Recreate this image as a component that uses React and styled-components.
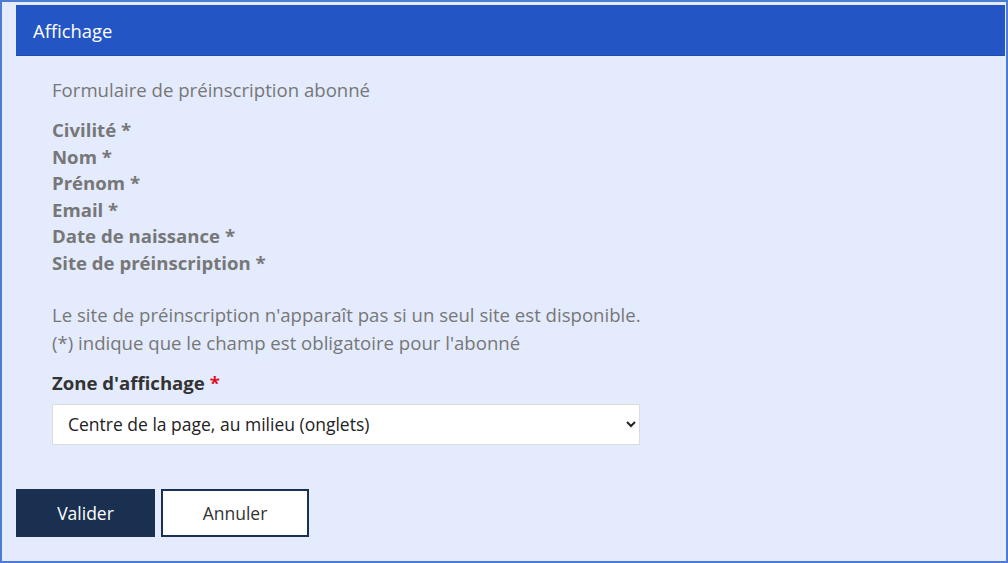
import styled, { createGlobalStyle } from "styled-components";

const GlobalStyle = createGlobalStyle`
  html, body {
    margin: 0;
    padding: 0;
    background: #e3ebfd;
  }
  body {
    font-family: "Open Sans", "Noto Sans", sans-serif;
  }
`;

const fields = [
  "Civilité",
  "Nom",
  "Prénom",
  "Email",
  "Date de naissance",
  "Site de préinscription",
];

function App() {
  return (
    <>
      <GlobalStyle />
      <Frame>
        <Header>
          <HeaderTitle>Affichage</HeaderTitle>
        </Header>
        <Body>
          <Intro>Formulaire de préinscription abonné</Intro>
          <FieldList>
            {fields.map((f) => (
              <FieldName key={f}>{f} *</FieldName>
            ))}
          </FieldList>
          <Notes>
            <Note>Le site de préinscription n'apparaît pas si un seul site est disponible.</Note>
            <Note>(*) indique que le champ est obligatoire pour l'abonné</Note>
          </Notes>
          <Label>
            Zone d'affichage <Required>*</Required>
          </Label>
          <Select defaultValue="centre">
            <option value="centre">Centre de la page, au milieu (onglets)</option>
            <option value="haut">Haut de la page</option>
            <option value="droite">Colonne de droite</option>
          </Select>
        </Body>
        <Actions>
          <Button $primary>Valider</Button>
          <Button>Annuler</Button>
        </Actions>
      </Frame>
    </>
  );
}

const Frame = styled.div`
  box-sizing: border-box;
  width: 1008px;
  height: 563px;
  border: 2px solid #4d7cd4;
  background: #e3ebfd;
  padding: 3px 1px 0 14px;
  display: flex;
  flex-direction: column;
`;

const Header = styled.div`
  height: 51px;
  background: #2356c4;
  border-bottom: 1px solid #1d4cb5;
  box-sizing: border-box;
  display: flex;
  align-items: center;
  padding-left: 17px;
`;

const HeaderTitle = styled.span`
  color: #fff;
  font-size: 18.4px;
`;

const Body = styled.div`
  padding: 20px 0 0 36px;
  display: flex;
  flex-direction: column;
  align-items: flex-start;
`;

const Intro = styled.div`
  color: #777;
  font-size: 18.6px;
  line-height: 28px;
`;

const FieldList = styled.div`
  margin-top: 13px;
  display: flex;
  flex-direction: column;
`;

const FieldName = styled.div`
  color: #777;
  font-weight: 700;
  font-size: 18.6px;
  line-height: 26.6px;
`;

const Notes = styled.div`
  margin-top: 24px;
`;

const Note = styled.div`
  color: #777;
  font-size: 18.6px;
  line-height: 28px;
`;

const Label = styled.div`
  margin-top: 12px;
  color: #333;
  font-weight: 700;
  font-size: 18.6px;
  line-height: 28px;
`;

const Required = styled.span`
  color: #e0101e;
`;

const Select = styled.select`
  margin-top: 7px;
  width: 588px;
  height: 41px;
  box-sizing: border-box;
  border: 1px solid #dcdcdc;
  background: #fff;
  font-family: "Open Sans", "Noto Sans", sans-serif;
  font-size: 17.5px;
  color: #222;
  padding: 0 10px 0 11px;
`;

const Actions = styled.div`
  margin-top: 44px;
  display: flex;
  gap: 6px;
`;

const Button = styled.button`
  box-sizing: border-box;
  height: 48px;
  width: ${(p) => (p.$primary ? "139px" : "148px")};
  background: ${(p) => (p.$primary ? "#1a3050" : "#fff")};
  color: ${(p) => (p.$primary ? "#fff" : "#333")};
  border: 2px solid #1a3050;
  font-family: "Open Sans", "Noto Sans", sans-serif;
  font-size: 17.5px;
  cursor: pointer;
`;

export default App;
